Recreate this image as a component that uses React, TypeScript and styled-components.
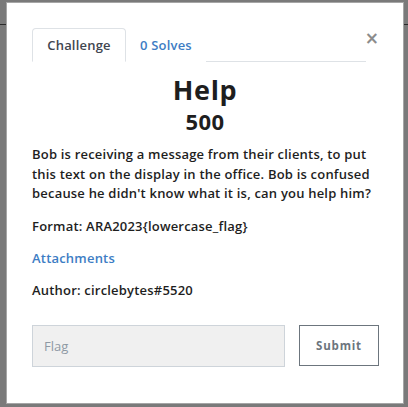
import React from "react";
import styled, { createGlobalStyle } from "styled-components";

const Global = createGlobalStyle`
  html, body { margin: 0; padding: 0; }
  body {
    width: 408px;
    height: 407px;
    overflow: hidden;
    background:
      linear-gradient(#2a2a2a, #2a2a2a) 0 24px / 100% 1px no-repeat,
      #7a7a7a;
    font-family: "Open Sans", "Liberation Sans", sans-serif;
  }
  #root { padding: 2px 0 0 6px; }
`;

const Modal = styled.div`
  box-sizing: border-box;
  width: 398px;
  height: 402px;
  background: #fff;
  border: 1px solid rgba(0, 0, 0, 0.35);
  padding: 25px 25px 0 25px;
  position: relative;
  color: #1e1e1e;
`;

const Close = styled.button`
  position: absolute;
  top: 27px;
  right: 24px;
  border: 0;
  background: none;
  padding: 0;
  font-size: 17px;
  line-height: 1;
  font-weight: 700;
  color: #8c8c8c;
  font-family: "DejaVu Sans", sans-serif;
`;

const Tabs = styled.div`
  display: flex;
  border-bottom: 1px solid #dee2e6;
  height: 33px;
  margin-right: 12px;
`;

const Tab = styled.div<{ $active?: boolean }>`
  box-sizing: border-box;
  height: 34px;
  padding: 0 13px;
  display: flex;
  align-items: center;
  justify-content: center;
  font-size: 13px;
  font-weight: 600;
  letter-spacing: 0.2px;
  color: ${(p) => (p.$active ? "#3f4650" : "#3d7dc4")};
  border: 1px solid ${(p) => (p.$active ? "#dee2e6" : "transparent")};
  border-bottom-color: ${(p) => (p.$active ? "#fff" : "transparent")};
  border-radius: 4px 4px 0 0;
  background: #fff;
  width: ${(p) => (p.$active ? "94px" : "auto")};
`;

const Title = styled.h2`
  margin: 11px 0 0;
  text-align: center;
  font-size: 27px;
  font-weight: 700;
  letter-spacing: 0.6px;
  line-height: 34px;
`;

const Points = styled.h3`
  margin: 0;
  text-align: center;
  font-size: 22px;
  font-weight: 700;
  letter-spacing: 0.4px;
  line-height: 28px;
`;

const Para = styled.p<{ $gap?: number }>`
  margin: ${(p) => p.$gap ?? 13}px 0 0;
  font-size: 13px;
  font-weight: 600;
  letter-spacing: 0.2px;
  line-height: 19.5px;
`;

const Link = styled.div`
  margin-top: 13px;
  font-size: 13px;
  font-weight: 600;
  letter-spacing: 0.2px;
  color: #3d7dc4;
  line-height: 19px;
`;

const Author = styled.div`
  margin-top: 13px;
  font-size: 13px;
  font-weight: 600;
  letter-spacing: 0.2px;
  line-height: 19px;
`;

const Form = styled.div`
  display: flex;
  gap: 14px;
  margin-top: 25px;
  align-items: flex-start;
`;

const Input = styled.input`
  box-sizing: border-box;
  width: 253px;
  height: 42px;
  flex: none;
  background: #f0f0f0;
  border: 1px solid #ced4da;
  padding: 0 11px;
  font-size: 13px;
  font-family: inherit;
  color: #495057;
  &::placeholder { color: #8e99a4; }
`;

const Submit = styled.button`
  box-sizing: border-box;
  width: 80px;
  height: 41px;
  flex: none;
  background: #fff;
  border: 1px solid #6c757d;
  border-radius: 0;
  font-family: inherit;
  font-size: 11.5px;
  font-weight: 700;
  letter-spacing: 0.8px;
  color: #6c757d;
`;

export default function App() {
  return (
    <>
      <Global />
      <Modal>
        <Close>×</Close>
        <Tabs>
          <Tab $active>Challenge</Tab>
          <Tab>0 Solves</Tab>
        </Tabs>
        <Title>Help</Title>
        <Points>500</Points>
        <Para $gap={10}>
          Bob is receiving a message from their clients, to put this text on the
          display in the office. Bob is confused because he didn't know what it
          is, can you help him?
        </Para>
        <Para>Format: ARA2023&#123;lowercase_flag&#125;</Para>
        <Link>Attachments</Link>
        <Author>Author: circlebytes#5520</Author>
        <Form>
          <Input placeholder="Flag" />
          <Submit>Submit</Submit>
        </Form>
      </Modal>
    </>
  );
}
